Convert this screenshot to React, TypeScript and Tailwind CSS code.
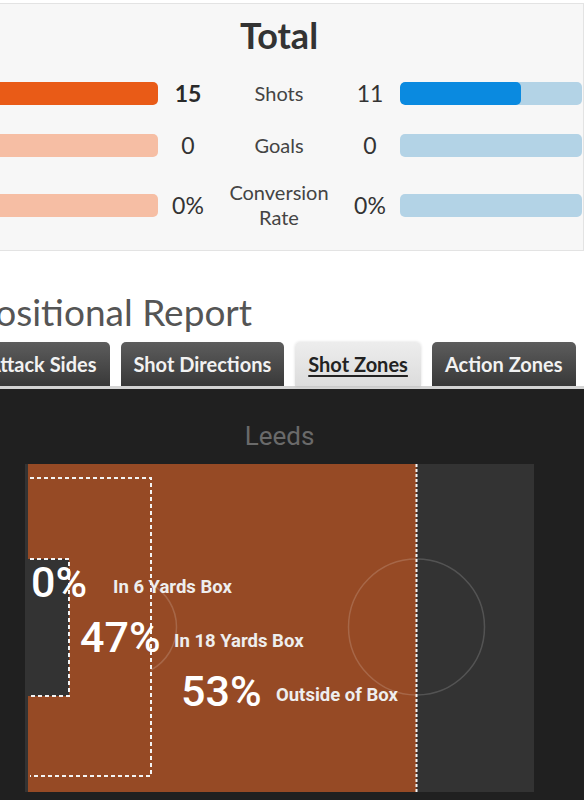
const rows = [
  { home: '15', label: ['Shots'], away: '11', homeBold: true, homeFill: 'bg-[#e95b17]', awayFill: 'w-[121px] bg-[#0a8ae0]' },
  { home: '0', label: ['Goals'], away: '0', homeBold: false, homeFill: '', awayFill: '' },
  { home: '0%', label: ['Conversion', 'Rate'], away: '0%', homeBold: false, homeFill: '', awayFill: '' },
];

const tabs = ['Attack Sides', 'Shot Directions', 'Shot Zones', 'Action Zones'];

function StatRow({ row, className }: { row: (typeof rows)[number]; className: string }) {
  return (
    <div className={`grid grid-cols-[182px_60px_122px_60px_182px] items-center ${className}`}>
      <div className="h-[23px] rounded-[5px] bg-[#f6bea4] overflow-hidden">
        {row.homeFill && <div className={`h-full w-full ${row.homeFill}`} />}
      </div>
      <div className={`text-center text-[23px] leading-[28px] ${row.homeBold ? 'font-bold text-[#2a2a2a]' : 'text-[#333]'}`}>
        {row.home}
      </div>
      <div className="text-center text-[20px] leading-[25px] text-[#444]">
        {row.label.map((l) => (
          <div key={l}>{l}</div>
        ))}
      </div>
      <div className="text-center text-[23px] leading-[28px] text-[#333]">{row.away}</div>
      <div className="h-[23px] rounded-[5px] bg-[#b3d3e6] overflow-hidden">
        {row.awayFill && <div className={`h-full rounded-[5px] ${row.awayFill}`} />}
      </div>
    </div>
  );
}

function Pitch() {
  return (
    <div className="relative mx-auto mt-[13px] h-[328px] w-[509px] font-[Roboto,sans-serif]">
      <svg width="509" height="328" viewBox="0 0 509 328" className="absolute inset-0">
        <rect x="0" y="0" width="509" height="328" fill="#333333" />
        <rect x="3" y="0" width="388.5" height="328" fill="#964a25" />
        {/* 6 yard box is empty */}
        <rect x="3" y="95" width="41" height="137" fill="#333333" />
        {/* centre circle and penalty arc */}
        <circle cx="391.5" cy="163" r="68" fill="none" stroke="rgba(255,255,255,0.16)" strokeWidth="1.5" />
        <path d="M126 120 A49 49 0 0 1 126 206" fill="none" stroke="rgba(255,255,255,0.16)" strokeWidth="1.5" />
        {/* 18 yard box */}
        <path d="M5 14 H126 V312 H5" fill="none" stroke="#f4f4f4" strokeWidth="2" strokeDasharray="4 3" />
        {/* 6 yard box */}
        <path d="M5 95 H44 V232 H5" fill="none" stroke="#f4f4f4" strokeWidth="2" strokeDasharray="4 3" />
        {/* halfway line */}
        <line x1="391.5" y1="0" x2="391.5" y2="328" stroke="#f4f4f4" strokeWidth="2" strokeDasharray="3 2" />
      </svg>

      <div className="absolute left-[6px] top-[97px] text-[43px] font-medium leading-none text-white">0%</div>
      <div className="absolute left-[88px] top-[114px] text-[18.5px] font-bold leading-none text-[#eee]">In 6 Yards Box</div>

      <div className="absolute left-[55px] top-[152px] text-[43px] font-medium leading-none text-white">47%</div>
      <div className="absolute left-[149px] top-[168px] text-[18.5px] font-bold leading-none text-[#eee]">In 18 Yards Box</div>

      <div className="absolute left-[156px] top-[206px] text-[43px] font-medium leading-none text-white">53%</div>
      <div className="absolute left-[251px] top-[222px] text-[18.5px] font-bold leading-none text-[#eee]">Outside of Box</div>
    </div>
  );
}

export default function App() {
  return (
    <div className="h-[800px] w-[584px] overflow-hidden bg-white font-[Lato,sans-serif]">
      <div className="-ml-[26px] w-[611px]">
        {/* Total card */}
        <div className="mt-[3px] w-[610px] border border-[#e3e3e3] bg-[#f7f7f7] px-[1px] pt-[9px] pb-[20px]">
          <h2 className="text-center text-[36px] font-bold leading-[44px] text-[#333]">Total</h2>
          <StatRow row={rows[0]} className="mt-[22px] h-[28px]" />
          <StatRow row={rows[1]} className="mt-[24px] h-[28px]" />
          <StatRow row={rows[2]} className="mt-[21px] h-[50px]" />
        </div>

        {/* Positional report */}
        <h2 className="mt-[39px] text-[37px] leading-[44px] text-[#555]">Positional Report</h2>

        <div className="mt-[8px] flex gap-[11px]">
          {tabs.map((t) =>
            t === 'Shot Zones' ? (
              <div
                key={t}
                className="flex h-[44px] items-center rounded-t-[5px] bg-gradient-to-b from-[#ededed] to-[#dcdcdc] px-[13px] text-[20px] font-bold text-[#222] underline decoration-[1.5px] underline-offset-[3px] shadow-[0_0_3px_rgba(0,0,0,0.15)]"
              >
                {t}
              </div>
            ) : (
              <div
                key={t}
                className="flex h-[44px] items-center rounded-t-[5px] bg-gradient-to-b from-[#5d5d5d] to-[#393939] px-[13px] text-[20px] font-bold text-[#f2f2f2]"
              >
                {t}
              </div>
            ),
          )}
        </div>
        <div className="h-[3px] bg-[#d4d4d4]" />

        <div className="h-[420px] bg-[#202020] pt-[32px]">
          <div className="text-center font-[Roboto,sans-serif] text-[26px] leading-[30px] text-[#6a6a6a]">Leeds</div>
          <Pitch />
        </div>
      </div>
    </div>
  );
}
